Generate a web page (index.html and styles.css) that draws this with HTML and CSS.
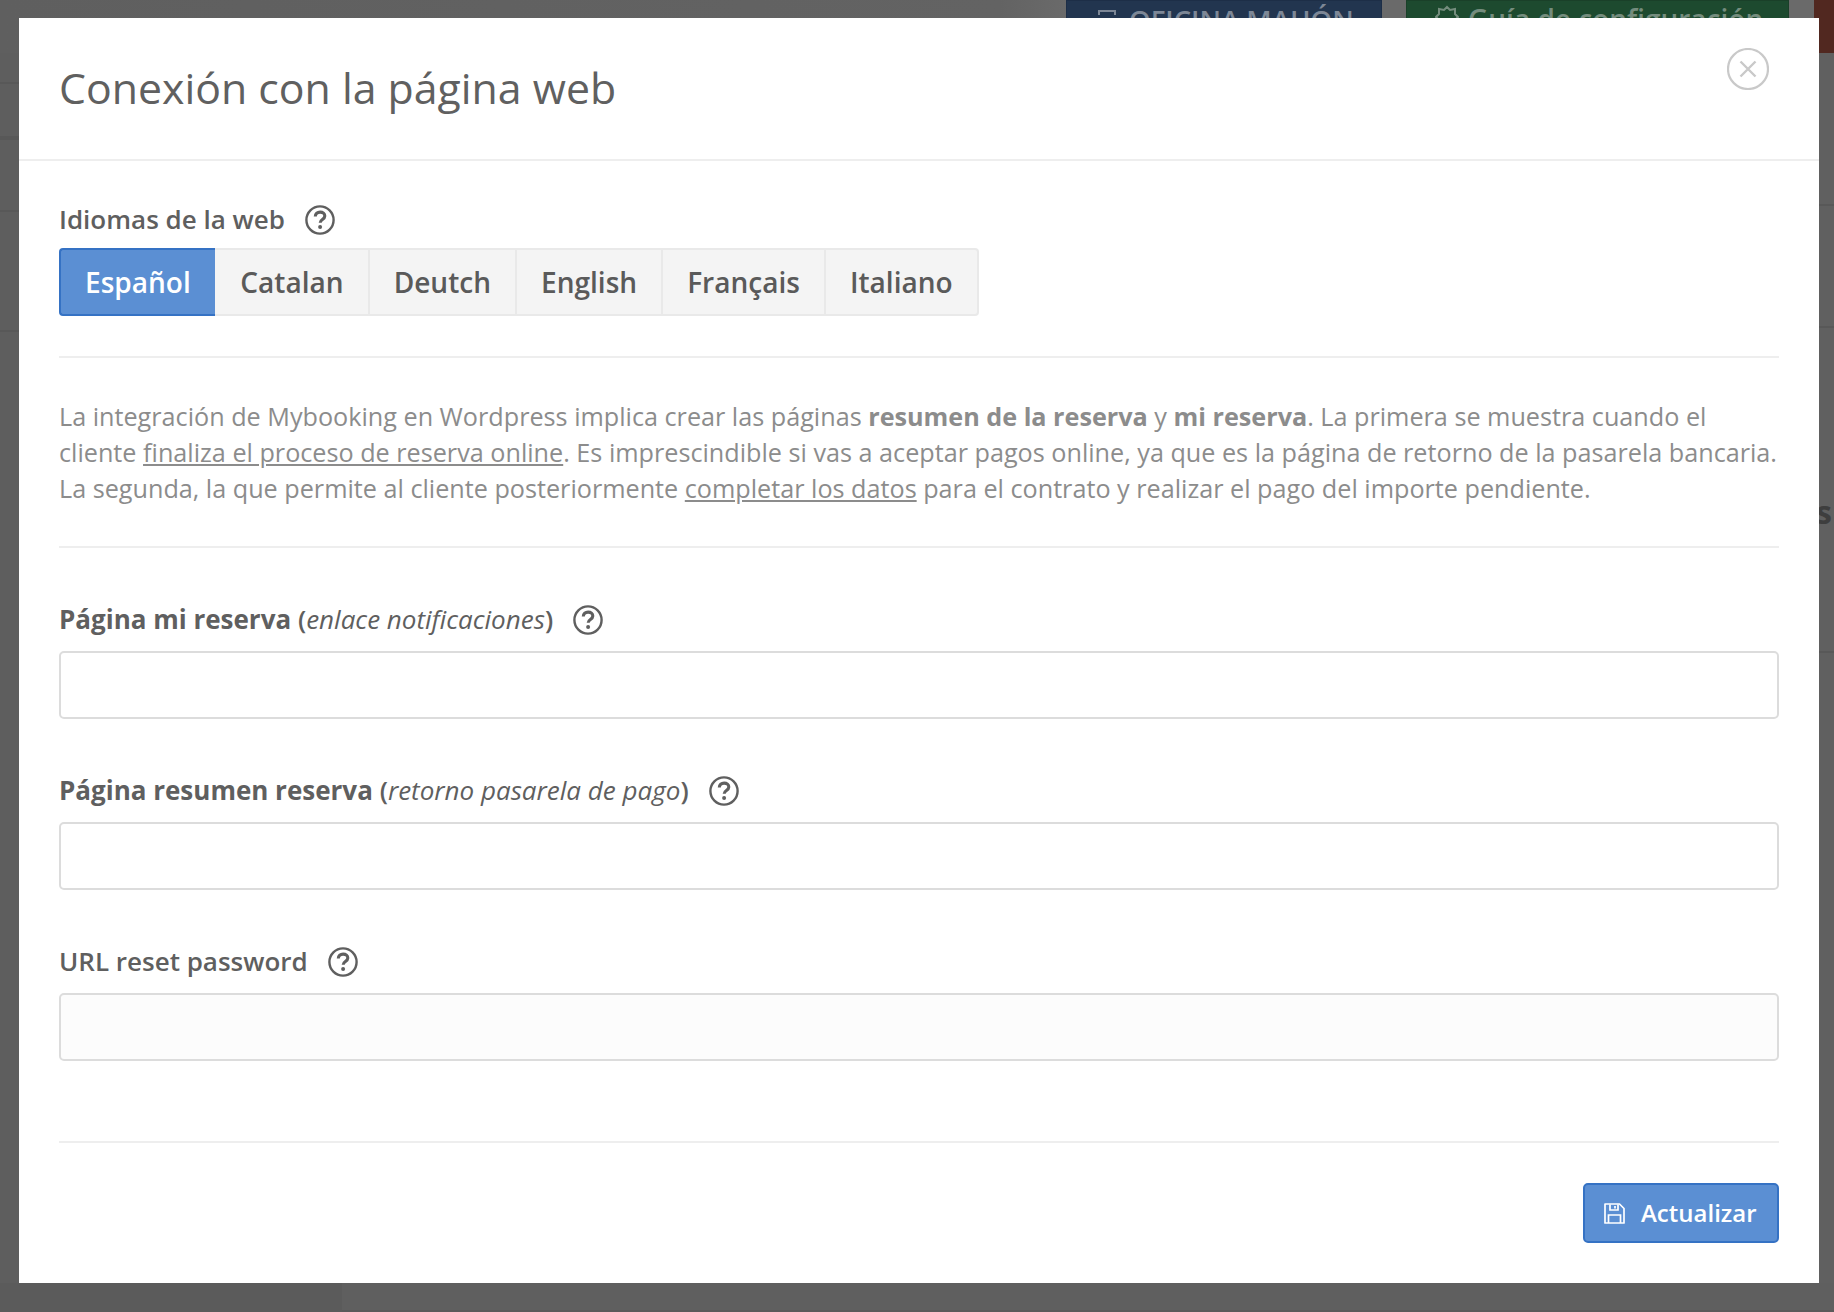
FILE: index.html
```html
<!DOCTYPE html>
<html lang="es">
<head>
<meta charset="utf-8">
<title>Conexión con la página web</title>
<link rel="stylesheet" href="styles.css">
</head>
<body>
<div class="page">
  <header class="topbar">
    <div class="top-btn top-blue">
      <svg class="top-icon" width="20" height="26" viewBox="0 0 20 26"><path d="M2 10V6h16v4M2 16h16" fill="none" stroke="currentColor" stroke-width="2"/></svg>
      <span class="top-label-blue">OFICINA MAHÓN</span>
    </div>
    <div class="top-btn top-green">
      <svg class="top-icon" width="24" height="26" viewBox="0 0 24 26"><path d="M12 3l3 3 5-1 0 5 3 3-3 3v5H4v-5l-3-3 3-3V5l5 1z" fill="none" stroke="currentColor" stroke-width="2"/></svg>
      <span class="top-label-green">Guía de configuración</span>
    </div>
    <div class="top-red"></div>
  </header>
  <div class="stage">
    <div class="strip strip-left">
      <div class="row r-left-1"></div>
      <div class="row r-left-2"></div>
      <div class="row r-left-3"></div>
      <div class="row r-left-4"></div>
    </div>
    <div class="strip strip-right">
      <div class="row r-right-1"></div>
      <div class="row r-right-2"></div>
      <div class="row r-right-3"><span class="stray">s</span></div>
    </div>
  </div>
  <div class="foot">
    <div class="foot-left"></div>
    <div class="foot-right"></div>
  </div>

  <section class="modal">
    <div class="modal-head">
      <h1 class="modal-title">Conexión con la página web</h1>
      <svg class="close-icon" width="42" height="42" viewBox="0 0 42 42"><circle cx="21" cy="21" r="20" fill="none" stroke="#c9c9c9" stroke-width="2.2"/><path d="M13.5 13.5l15 15M28.5 13.5l-15 15" fill="none" stroke="#c9c9c9" stroke-width="2.4"/></svg>
    </div>
    <div class="modal-body">
      <div class="label label-first">
        <span>Idiomas de la web</span>
        <svg class="help" width="30" height="30" viewBox="0 0 30 30"><circle cx="15" cy="15" r="13.6" fill="none" stroke="#5f5f5f" stroke-width="2.4"/><path d="M10.300 11.600c0-2.900 2.100-4.500 4.800-4.500 2.800 0 4.700 1.600 4.700 3.900 0 3.600-4.600 3.400-4.600 6.700" fill="none" stroke="#5f5f5f" stroke-width="3.100"/><circle cx="15.100" cy="22" r="2" fill="#5f5f5f"/></svg>
      </div>
      <div class="tabs">
        <div class="tab tab-active">Español</div>
        <div class="tab tab-second">Catalan</div>
        <div class="tab">Deutch</div>
        <div class="tab">English</div>
        <div class="tab">Français</div>
        <div class="tab">Italiano</div>
      </div>
      <hr class="rule rule-a">
      <p class="intro">La integración de Mybooking en Wordpress implica crear las páginas <b>resumen de la reserva</b> y <b>mi reserva</b>. La primera se muestra cuando el cliente <u>finaliza el proceso de reserva online</u>. Es imprescindible si vas a aceptar pagos online, ya que es la página de retorno de la pasarela bancaria. La segunda, la que permite al cliente posteriormente <u>completar los datos</u> para el contrato y realizar el pago del importe pendiente.</p>
      <hr class="rule rule-b">
      <div class="label label-field-1">
        <span><b>Página mi reserva</b> (<i>enlace notificaciones</i>)</span>
        <svg class="help" width="30" height="30" viewBox="0 0 30 30"><circle cx="15" cy="15" r="13.6" fill="none" stroke="#5f5f5f" stroke-width="2.4"/><path d="M10.300 11.600c0-2.900 2.100-4.500 4.800-4.500 2.800 0 4.700 1.600 4.700 3.900 0 3.600-4.600 3.400-4.600 6.700" fill="none" stroke="#5f5f5f" stroke-width="3.100"/><circle cx="15.100" cy="22" r="2" fill="#5f5f5f"/></svg>
      </div>
      <input class="field" type="text">
      <div class="label label-field">
        <span><b>Página resumen reserva</b> (<i>retorno pasarela de pago</i>)</span>
        <svg class="help" width="30" height="30" viewBox="0 0 30 30"><circle cx="15" cy="15" r="13.6" fill="none" stroke="#5f5f5f" stroke-width="2.4"/><path d="M10.300 11.600c0-2.900 2.100-4.500 4.800-4.500 2.800 0 4.700 1.600 4.700 3.900 0 3.600-4.600 3.400-4.600 6.700" fill="none" stroke="#5f5f5f" stroke-width="3.100"/><circle cx="15.100" cy="22" r="2" fill="#5f5f5f"/></svg>
      </div>
      <input class="field" type="text">
      <div class="label label-field">
        <span>URL reset password</span>
        <svg class="help" width="30" height="30" viewBox="0 0 30 30"><circle cx="15" cy="15" r="13.6" fill="none" stroke="#5f5f5f" stroke-width="2.4"/><path d="M10.300 11.600c0-2.900 2.100-4.500 4.800-4.500 2.800 0 4.700 1.600 4.700 3.900 0 3.600-4.600 3.400-4.600 6.700" fill="none" stroke="#5f5f5f" stroke-width="3.100"/><circle cx="15.100" cy="22" r="2" fill="#5f5f5f"/></svg>
      </div>
      <input class="field field-muted" type="text">
      <hr class="rule rule-c">
      <div class="actions">
        <button class="save" type="button">
          <svg width="21" height="21" viewBox="0 0 21 21"><path d="M1 1h14.500L20 5.500V20H1z" fill="none" stroke="#fff" stroke-width="1.700" stroke-linejoin="round"/><path d="M6 1.500V7h8V1.500M11 3v2.500M4.500 20v-8h12v8" fill="none" stroke="#fff" stroke-width="1.700"/></svg>
          <span class="save-text">Actualizar</span>
        </button>
      </div>
    </div>
  </section>
</div>
</body>
</html>
```
FILE: styles.css
```css
* { box-sizing: border-box; }
html, body { margin: 0; padding: 0; }
body {
  width: 1834px;
  height: 1312px;
  overflow: hidden;
  background: #5e5e5e;
  font-family: "Open Sans", "Noto Sans", sans-serif;
}
.page { position: relative; width: 1834px; height: 1312px; overflow: hidden; }

/* dimmed page behind the dialog */
.topbar {
  display: flex;
  height: 53px;
  padding-left: 1066px;
  background: linear-gradient(90deg, #5f5f5f 0, #636363 1000px, #6a6a6a 1066px);
}
.top-btn {
  display: flex;
  align-items: flex-start;
  height: 53px;
  overflow: hidden;
  white-space: nowrap;
  font-weight: 600;
}
.top-blue {
  width: 316px;
  padding: 1px 0 0 30px;
  gap: 12px;
  background: #22354f;
  border: 1px solid #1d2e47;
  color: #7d8796;
  font-size: 27.500px;
  line-height: 36px;
}
.top-green {
  width: 383px;
  margin-left: 24px;
  padding: 0 0 0 28px;
  gap: 9px;
  background: #1d4a2f;
  border: 1px solid #1a4029;
  color: #748c7d;
  font-size: 28px;
  line-height: 36px;
}
.top-icon { flex: none; margin-top: 3px; }
.top-red { width: 20px; height: 53px; margin-left: 25px; background: #512820; }

.stage { display: flex; justify-content: space-between; height: 1230px; }
.strip { width: 19px; }
.strip-right { width: 15px; background: #606060; }
.row { border-bottom: 2px solid #585858; }
.r-left-1 { height: 31px; }
.r-left-2 { height: 56px; border-bottom-width: 4px; }
.r-left-3 { height: 72px; }
.r-left-4 { height: 120px; }
.r-right-1 { height: 153px; }
.r-right-2 { height: 122px; }
.r-right-3 { height: 325px; padding-top: 166px; }
.stray {
  display: block;
  margin-left: -3px;
  font: 700 32px/36px "Open Sans", sans-serif;
  color: #3e3e3e;
}
.foot { display: flex; height: 29px; }
.foot-left { width: 342px; background: #5b5b5b; }
.foot-right { flex: 1; background: #5f5f5f; border-bottom: 2px solid #5a5a5a; }

/* dialog */
.modal {
  position: absolute;
  top: 18px;
  left: 19px;
  width: 1800px;
  height: 1265px;
  background: #fff;
}
.modal-head {
  display: flex;
  justify-content: space-between;
  align-items: flex-start;
  height: 143px;
  padding: 0 40px;
  border-bottom: 2px solid #eee;
}
.modal-title {
  margin: 40px 0 0;
  font-size: 42.800px;
  line-height: 60px;
  font-weight: 400;
  color: #606060;
}
.close-icon { margin: 30px 10px 0 0; flex: none; }

.modal-body { padding: 0 40px; }
.label {
  display: flex;
  align-items: center;
  gap: 20px;
  height: 36px;
  font-size: 26px;
  line-height: 36px;
  color: #5f5f5f;
}
.label b { font-weight: 700; }
.label i { font-weight: 400; }
.label > span { font-weight: 600; margin-bottom: 2px; }
.label-first { margin: 41px 0 10px; }
.label-field-1 { margin: 54px 0 13px; }
.label-field { margin: 54px 0 13px; }

.tabs { display: flex; height: 68px; }
.tab {
  display: flex;
  align-items: center;
  justify-content: center;
  padding: 0 24px;
  font-size: 28.050px;
  font-weight: 600;
  color: #5a5a5a;
  background: #f4f4f4;
  border: 2px solid #e9e9e9;
  border-left-width: 0;
}
.tab-second { padding-left: 25.500px; }
.tab:last-child { border-top-right-radius: 4px; border-bottom-right-radius: 4px; }
.tab-active {
  color: #fff;
  background: #5b8fd3;
  border: 2px solid #3572c4;
  border-right-width: 0;
  border-radius: 4px 0 0 4px;
}

.rule { height: 2px; margin: 0; border: 0; background: #eee; }
.rule-a { margin-top: 40px; }
.rule-b { margin-top: 40px; }
.rule-c { margin-top: 80px; }

.intro {
  margin: 40px 0 0;
  font-size: 25.200px;
  line-height: 36px;
  color: #8c8c8c;
}
.intro b { font-weight: 700; }

.field {
  display: block;
  width: 100%;
  height: 68px;
  background: #fff;
  border: 2px solid #dcdcdc;
  border-radius: 5px;
  outline: none;
}
.field-muted { background: #fcfcfc; }

.actions { display: flex; justify-content: flex-end; margin-top: 40px; }
.save {
  display: flex;
  align-items: center;
  gap: 16px;
  width: 196px;
  height: 60px;
  padding: 0 0 0 19px;
  background: #5b8fd3;
  border: 2px solid #3572c4;
  border-radius: 5px;
  color: #fff;
  font-family: inherit;
  font-size: 24px;
  font-weight: 600;
}
.save-text { margin-bottom: 2px; }
```
